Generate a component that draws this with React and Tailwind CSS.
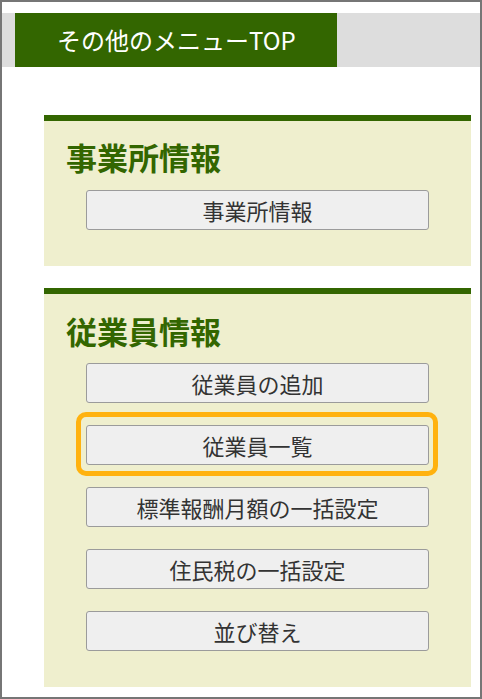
const font = { fontFamily: '"Noto Sans CJK JP", "Noto Sans", sans-serif' };

function MenuButton({ label, highlight }) {
    return (
        <div className="relative">
            {highlight && (
                <span className="absolute -left-[10px] -right-[9px] -top-[13px] -bottom-[11px] border-[5px] border-[#ffb20f] rounded-[10px]"></span>
            )}
            <button className="relative w-full h-[40px] bg-[#efefef] border border-[#9b9b9b] rounded-[3px] text-[22px] leading-none text-[#333333]">
                {label}
            </button>
        </div>
    );
}

function Section({ title, items, className }) {
    return (
        <div className={`ml-[42px] mr-[9px] border-t-[6px] border-[#336600] bg-[#efefce] pb-[36px] ${className}`}>
            <h2 className="pl-[22px] text-[31px] leading-[40px] font-bold text-[#336600]">{title}</h2>
            <div className="mx-[42px] flex flex-col gap-[22px]">
                {items.map((item) => (
                    <MenuButton key={item.label} label={item.label} highlight={item.highlight} />
                ))}
            </div>
        </div>
    );
}

export default function App() {
    return (
        <div className="w-[482px] h-[699px] border-2 border-[#767676] bg-white overflow-hidden" style={font}>
            {/* Tab bar */}
            <div className="mt-[11px] h-[54px] bg-[#dddddd] flex">
                <div className="ml-[13px] w-[322px] h-full bg-[#336600] flex items-center pl-[42px] text-white text-[24px]">
                    その他のメニューTOP
                </div>
            </div>

            <Section
                title="事業所情報"
                className="mt-[48px] pt-[16px] [&>div]:mt-[13px]"
                items={[{ label: '事業所情報' }]}
            />

            <Section
                title="従業員情報"
                className="mt-[22px] pt-[17px] [&>div]:mt-[12px]"
                items={[
                    { label: '従業員の追加' },
                    { label: '従業員一覧', highlight: true },
                    { label: '標準報酬月額の一括設定' },
                    { label: '住民税の一括設定' },
                    { label: '並び替え' },
                ]}
            />
        </div>
    );
}
